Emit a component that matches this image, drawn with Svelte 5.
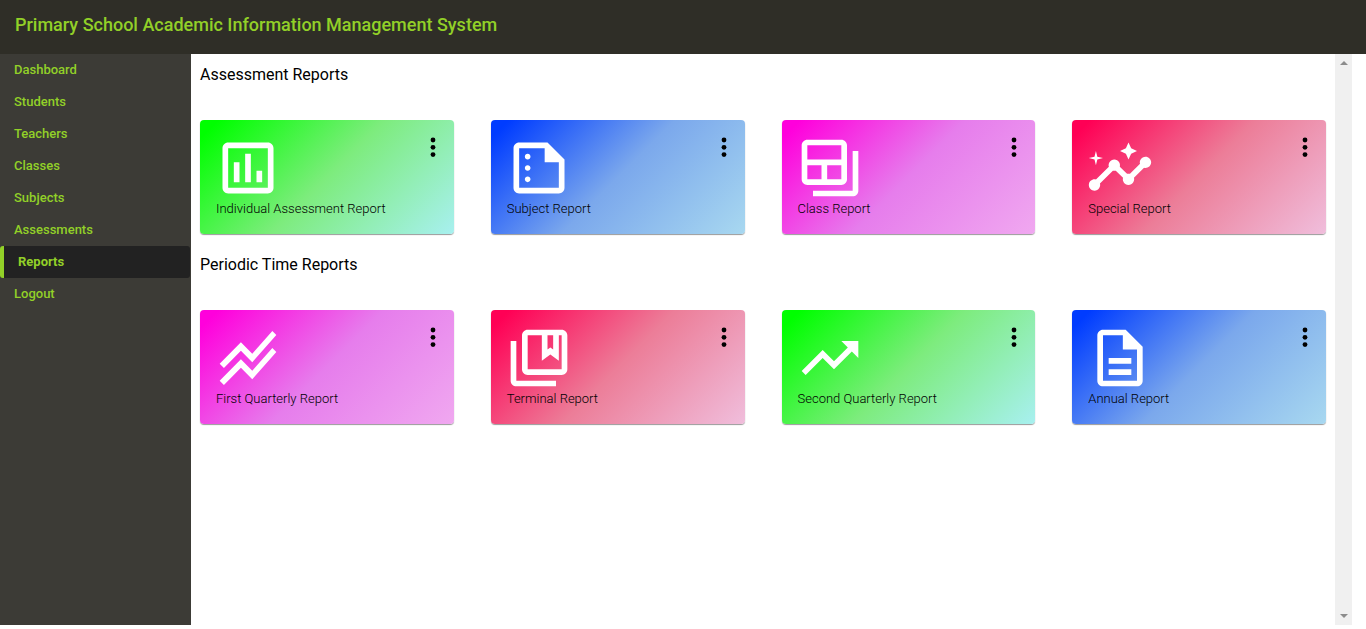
<script>
  const nav = ['Dashboard', 'Students', 'Teachers', 'Classes', 'Subjects', 'Assessments', 'Reports', 'Logout'];
  const active = 'Reports';

  const icons = {
    chart: 'M9 17H7v-7h2v7zm4 0h-2V7h2v10zm4 0h-2v-4h2v4zm2 2H5V5h14v14zm0-16H5c-1.1 0-2 .9-2 2v14c0 1.1.9 2 2 2h14c1.1 0 2-.9 2-2V5c0-1.1-.9-2-2-2z',
    summary: 'M15 3H5C3.9 3 3.01 3.9 3.01 5L3 19c0 1.1.89 2 1.99 2H19c1.1 0 2-.9 2-2V9l-6-6zM5 19V5h9v5h5v9H5zM9 8c0 .55-.45 1-1 1s-1-.45-1-1 .45-1 1-1 1 .45 1 1zm0 4c0 .55-.45 1-1 1s-1-.45-1-1 .45-1 1-1 1 .45 1 1zm0 4c0 .55-.45 1-1 1s-1-.45-1-1 .45-1 1-1 1 .45 1 1z',
    table: 'M20 6v14H6v2h14c1.1 0 2-.9 2-2V6h-2zM16 2H4c-1.1 0-2 .9-2 2v12c0 1.1.9 2 2 2h12c1.1 0 2-.9 2-2V4c0-1.1-.9-2-2-2zM9 16H4v-5h5v5zm7 0h-5v-5h5v5zm0-7H4V4h12v5z',
    insights: 'M21 8c-1.45 0-2.26 1.44-1.93 2.51l-3.55 3.56c-.3-.09-.74-.09-1.04 0l-2.55-2.55C12.27 10.45 11.46 9 10 9c-1.45 0-2.27 1.44-1.93 2.52l-4.56 4.55C2.44 15.74 1 16.55 1 18c0 1.1.9 2 2 2 1.45 0 2.26-1.44 1.93-2.51l4.55-4.56c.3.09.74.09 1.04 0l2.55 2.55C12.73 16.55 13.54 18 15 18c1.45 0 2.27-1.44 1.93-2.52l3.56-3.55C21.56 12.26 23 11.45 23 10c0-1.1-.9-2-2-2zM15 9l.94-2.07L18 6l-2.06-.93L15 3l-.92 2.07L12 6l2.08.93zM3.5 11L4 9l2-.5L4 8l-.5-2L3 8l-2 .5L3 9z',
    stacked: 'M2 19.99l7.5-7.51 4 4 7.09-7.97L22 9.92l-8.5 9.56-4-4-6 6.01L2 19.99zM3.5 15.49l6-6.01 4 4L22 3.92l-1.41-1.41-7.09 7.97-4-4L2 13.99l1.5 1.5z',
    bookmarks: 'M4 6H2v14c0 1.1.9 2 2 2h14v-2H4V6zM20 2H8c-1.1 0-2 .9-2 2v12c0 1.1.9 2 2 2h12c1.1 0 2-.9 2-2V4c0-1.1-.9-2-2-2zm-5 2h2v5l-1-.75L15 9V4zm5 12H8V4h5v9l3-2.25L19 13V4h1v12z',
    trend: 'M16 6l2.29 2.29-4.88 4.88-4-4L2 16.59 3.41 18l6-6 4 4 6.3-6.29L22 12V6z',
    document: 'M8 16h8v2H8v-2zm0-4h8v2H8v-2zm6-10H6c-1.1 0-2 .9-2 2v16c0 1.1.89 2 1.99 2H18c1.1 0 2-.9 2-2V8l-6-6zm4 18H6V4h7v5h5v11z'
  };

  const sections = [
    {
      title: 'Assessment Reports',
      cards: [
        { label: 'Individual Assessment Report', icon: 'chart', tone: 'green' },
        { label: 'Subject Report', icon: 'summary', tone: 'blue' },
        { label: 'Class Report', icon: 'table', tone: 'magenta' },
        { label: 'Special Report', icon: 'insights', tone: 'red' }
      ]
    },
    {
      title: 'Periodic Time Reports',
      cards: [
        { label: 'First Quarterly Report', icon: 'stacked', tone: 'magenta' },
        { label: 'Terminal Report', icon: 'bookmarks', tone: 'red' },
        { label: 'Second Quarterly Report', icon: 'trend', tone: 'green' },
        { label: 'Annual Report', icon: 'document', tone: 'blue' }
      ]
    }
  ];
</script>

<div class="page">
  <header><h1>Primary School Academic Information Management System</h1></header>
  <div class="body">
    <nav>
      {#each nav as item}
        <a href="#{item.toLowerCase()}" class:active={item === active} aria-current={item === active ? 'page' : undefined}>{item}</a>
      {/each}
    </nav>
    <main>
      {#each sections as section}
        <section>
          <h2>{section.title}</h2>
          <div class="cards">
            {#each section.cards as card}
              <article class={card.tone}>
                <div class="top">
                  <svg class="icon" viewBox="0 0 24 24" aria-hidden="true"><path d={icons[card.icon]} /></svg>
                  <button type="button" aria-label="{card.label} options">
                    <svg viewBox="0 0 6 20" aria-hidden="true">
                      <circle cx="3" cy="3" r="2.4" /><circle cx="3" cy="10.3" r="2.4" /><circle cx="3" cy="17.6" r="2.4" />
                    </svg>
                  </button>
                </div>
                <p>{card.label}</p>
              </article>
            {/each}
          </div>
        </section>
      {/each}
    </main>
    <div class="scroll" aria-hidden="true">
      <svg viewBox="0 0 8 4"><path d="M0 4L4 0l4 4z" /></svg>
      <svg viewBox="0 0 8 4"><path d="M0 0l4 4 4-4z" /></svg>
    </div>
  </div>
</div>

<style>
  :global(body) {
    margin: 0;
    background: #fff;
    font-family: Roboto, sans-serif;
  }
  .page {
    box-sizing: border-box;
    min-height: 100vh;
    padding-bottom: 4px;
    display: flex;
    flex-direction: column;
  }
  header {
    padding: 13px 15px 17px;
    background: #2f2e27;
  }
  h1 {
    margin: 0;
    font-size: 18px;
    line-height: 24px;
    font-weight: 500;
    color: #92d028;
  }
  .body {
    flex: 1;
    display: grid;
    grid-template-columns: 191px 1fr 17px;
    padding-right: 14px;
  }
  nav {
    background: #3c3b36;
    display: flex;
    flex-direction: column;
    padding-right: 1px;
  }
  nav a {
    padding-left: 14px;
    font-size: 13px;
    line-height: 32px;
    font-weight: 500;
    color: #92d028;
    text-decoration: none;
  }
  nav a.active {
    border-left: 4px solid #92d028;
    border-radius: 3px;
    background: #222;
    font-weight: 700;
  }
  main {
    padding: 9px;
  }
  section {
    margin-bottom: 19px;
  }
  h2 {
    margin: 0 0 33px;
    font-size: 16px;
    line-height: 24px;
    font-weight: 400;
    color: #000;
  }
  .cards {
    display: grid;
    grid-template-columns: repeat(4, 1fr);
    gap: 37px;
  }
  article {
    padding: 14px 14px 18px;
    border-radius: 4px;
    box-shadow: 0 1px 1px rgba(0, 0, 0, 0.4);
  }
  .green { background: linear-gradient(135deg, #00ff00 5%, #7dec7d 50%, #a8f0f0); }
  .blue { background: linear-gradient(135deg, #003cff 5%, #7ba8ec 50%, #a8d8f0); }
  .magenta { background: linear-gradient(135deg, #ff00dc 5%, #e67dec 50%, #f0a8f0); }
  .red { background: linear-gradient(135deg, #ff0055 5%, #ec7d98 50%, #f0bedc); }
  .top {
    display: flex;
    justify-content: space-between;
    align-items: flex-start;
  }
  .icon {
    width: 68px;
    height: 68px;
    fill: #fff;
  }
  button {
    margin: 3px 4px 0 0;
    padding: 0;
    border: 0;
    background: none;
    display: flex;
  }
  button svg {
    width: 6px;
    height: 20px;
  }
  p {
    margin: 0;
    padding: 0 2px;
    font-size: 13px;
    line-height: 14px;
    font-weight: 300;
    color: #000;
  }
  .scroll {
    background: #f0f0f0;
    display: flex;
    flex-direction: column;
    justify-content: space-between;
    align-items: center;
    padding: 7px 0;
  }
  .scroll svg {
    width: 8px;
    height: 4px;
    fill: #8c8c8c;
  }
</style>
